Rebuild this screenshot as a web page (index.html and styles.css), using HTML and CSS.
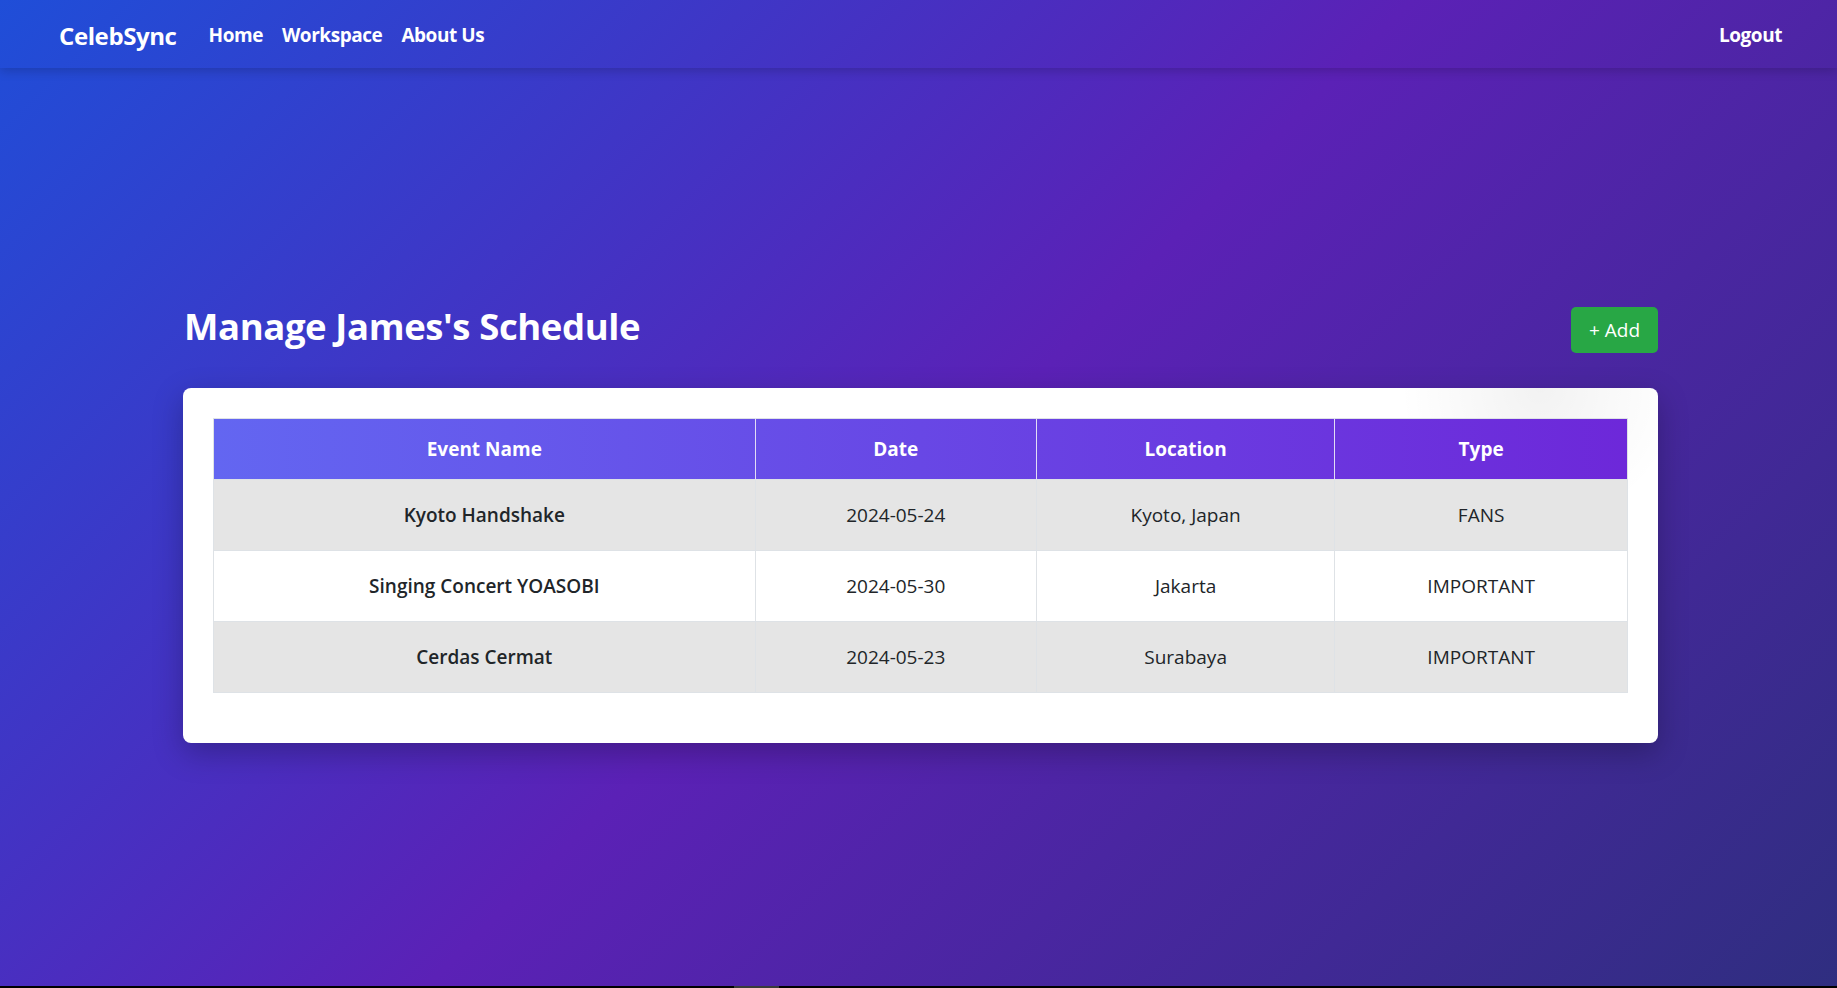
FILE: index.html
```html
<!DOCTYPE html>
<html lang="en">
<head>
<meta charset="utf-8">
<title>CelebSync - Manage Schedule</title>
<link rel="stylesheet" href="styles.css">
</head>
<body>
<nav class="navbar">
  <div class="nav-left">
    <a class="brand" href="#">CelebSync</a>
    <ul class="nav-links">
      <li><a href="#">Home</a></li>
      <li><a href="#">Workspace</a></li>
      <li><a href="#">About Us</a></li>
    </ul>
  </div>
  <a class="logout" href="#">Logout</a>
</nav>
<main class="page">
  <section class="schedule">
    <div class="schedule-head">
      <h1 class="title">Manage James's Schedule</h1>
      <button class="btn-add" type="button">+ Add</button>
    </div>
    <div class="card">
      <table class="events">
        <thead>
          <tr>
            <th class="col-name">Event Name</th>
            <th class="col-date">Date</th>
            <th class="col-loc">Location</th>
            <th class="col-type">Type</th>
          </tr>
        </thead>
        <tbody>
          <tr>
            <td class="ev-name">Kyoto Handshake</td>
            <td>2024-05-24</td>
            <td>Kyoto, Japan</td>
            <td>FANS</td>
          </tr>
          <tr>
            <td class="ev-name">Singing Concert YOASOBI</td>
            <td>2024-05-30</td>
            <td>Jakarta</td>
            <td>IMPORTANT</td>
          </tr>
          <tr>
            <td class="ev-name">Cerdas Cermat</td>
            <td>2024-05-23</td>
            <td>Surabaya</td>
            <td>IMPORTANT</td>
          </tr>
        </tbody>
      </table>
    </div>
  </section>
</main>
<div class="bottom-bar"><span class="bar-thumb"></span></div>
</body>
</html>
```

FILE: styles.css
```css
* {
  box-sizing: border-box;
}

html, body {
  margin: 0;
  padding: 0;
  height: 100%;
}

body {
  font-family: "Segoe UI", "Open Sans", "Noto Sans", sans-serif;
  color: #212529;
  background: linear-gradient(135deg, #1f4ed8 0%, #5b21b6 50%, #2f2e80 100%);
  min-height: 100vh;
  overflow: hidden;
}

a {
  text-decoration: none;
  color: inherit;
}

/* Navbar */
.navbar {
  position: relative;
  z-index: 2;
  height: 68px;
  display: flex;
  align-items: center;
  justify-content: space-between;
  padding: 2px 55px 0 59px;
  box-shadow: 0 3px 10px rgba(0, 0, 0, 0.18);
}

.nav-left {
  display: flex;
  align-items: center;
}

.brand {
  color: #fff;
  font-size: 24px;
  font-weight: 700;
  letter-spacing: -0.4px;
  margin-right: 32px;
}

.nav-links {
  display: flex;
  gap: 19px;
  list-style: none;
  margin: 0;
  padding: 0;
}

.nav-links a,
.logout {
  color: #fff;
  font-size: 19px;
  font-weight: 700;
  letter-spacing: -0.45px;
}

/* Page */
.page {
  height: calc(100vh - 70px);
  display: flex;
  align-items: center;
  justify-content: center;
  padding: 0 0 9px 4px;
}

.schedule {
  width: 1475px;
}

.schedule-head {
  display: flex;
  align-items: flex-end;
  justify-content: space-between;
  margin-bottom: 35px;
}

.title {
  margin: 0 0 3px 0;
  padding-left: 1px;
  color: #fff;
  font-size: 36.5px;
  line-height: 48px;
  font-weight: 700;
  letter-spacing: -0.4px;
}

.btn-add {
  font-family: inherit;
  background: #28a745;
  color: #fff;
  border: none;
  border-radius: 5px;
  font-size: 19px;
  line-height: 30px;
  padding: 8px 18px;
  cursor: pointer;
}

/* Card */
.card {
  background: radial-gradient(circle at 92% 0%, rgba(0, 0, 0, 0.05) 0, rgba(0, 0, 0, 0) 140px), #fff;
  border-radius: 8px;
  padding: 30px 30px 50px 30px;
  box-shadow: 0 10px 30px rgba(0, 0, 0, 0.25);
}

.events {
  width: 100%;
  border-collapse: collapse;
  border: 1px solid #dee2e6;
  font-size: 19px;
  text-align: center;
}

.events thead tr {
  background: linear-gradient(90deg, #6366f1 0%, #6d28d9 100%);
}

.events th {
  color: #fff;
  font-weight: 700;
  line-height: 30px;
  padding: 15px 10px;
  border: 1px solid #e2ddf5;
  border-top-color: #dee2e6;
  border-bottom: none;
}

.events th:first-child {
  border-left-color: #dee2e6;
}

.events th:last-child {
  border-right-color: #dee2e6;
}

.col-name { width: 38.3%; }
.col-date { width: 19.9%; }
.col-loc { width: 21.1%; }
.col-type { width: 20.7%; }

.events td {
  line-height: 30px;
  padding: 20px 10px;
  border: 1px solid #dee2e6;
  color: #212529;
}

.events tbody tr:nth-child(odd) {
  background: #e5e5e5;
}

.events tbody tr:nth-child(even) {
  background: #fff;
}

.ev-name {
  font-weight: 600;
}

/* Bottom strip */
.bottom-bar {
  height: 2px;
  background: #000;
  padding-left: 734px;
}

.bar-thumb {
  display: block;
  width: 45px;
  height: 2px;
  background: #3a3a3a;
}
```
